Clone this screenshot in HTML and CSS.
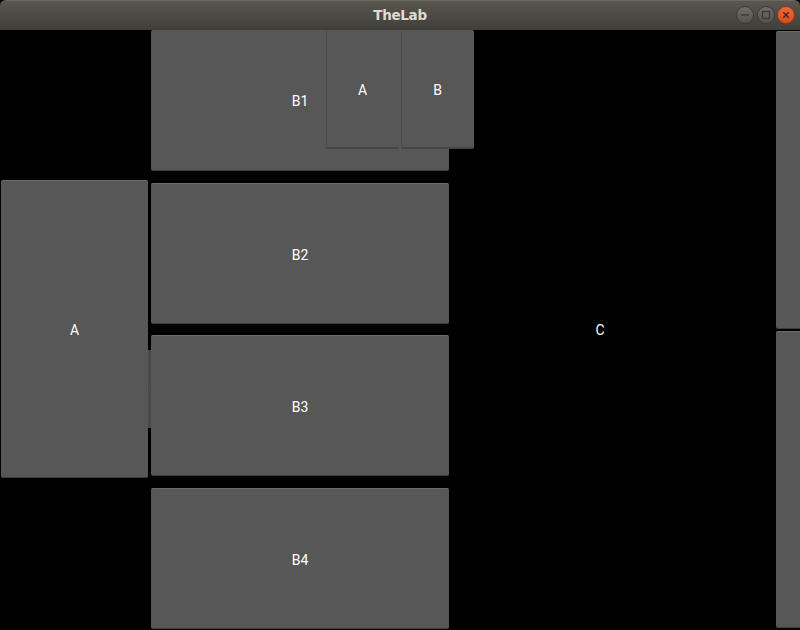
FILE: index.html
```html
<!DOCTYPE html>
<html>
<head>
<meta charset="utf-8">
<title>TheLab</title>
<link rel="stylesheet" href="styles.css">
</head>
<body>
<div class="window">
  <header class="titlebar">
    <span class="title">TheLab</span>
    <div class="controls">
      <span class="wbtn">
        <svg width="18" height="18" viewBox="0 0 18 18"><line x1="5" y1="9" x2="13" y2="9" stroke="#3a3935" stroke-width="1.4"/></svg>
      </span>
      <span class="wbtn">
        <svg width="18" height="18" viewBox="0 0 18 18"><rect x="5.5" y="5.5" width="7" height="7" fill="none" stroke="#3a3935" stroke-width="1.3"/></svg>
      </span>
      <span class="wbtn close">
        <svg width="18" height="18" viewBox="0 0 18 18"><path d="M6.3 6.3 L11.7 11.7 M11.7 6.3 L6.3 11.7" stroke="#3b2a22" stroke-width="1.4"/></svg>
      </span>
    </div>
  </header>
  <main class="stage">
    <div class="col-left">
      <div class="tile big-a">A</div>
    </div>
    <div class="col-mid">
      <div class="tile btile b1"><span class="b1-label">B1</span></div>
      <div class="tile btile">B2</div>
      <div class="tile btile">B3</div>
      <div class="tile btile">B4</div>
    </div>
    <div class="col-c">C</div>
    <div class="col-right">
      <div class="tile strip top"></div>
      <div class="tile strip"></div>
    </div>
    <div class="tile mini mini-a">A</div>
    <div class="tile mini mini-b">B</div>
    <div class="splitter"><span class="dot"></span></div>
  </main>
</div>
</body>
</html>
```

FILE: styles.css
```css
* { box-sizing: border-box; }
html, body {
  margin: 0;
  padding: 0;
  background: #000;
  width: 800px;
  height: 630px;
  overflow: hidden;
  font-family: Roboto, "Noto Sans", sans-serif;
}
.window {
  width: 800px;
  height: 630px;
  display: flex;
  flex-direction: column;
}
.titlebar {
  height: 30px;
  flex: none;
  position: relative;
  display: flex;
  align-items: center;
  justify-content: center;
  background: linear-gradient(#59574f, #3f3e3a);
  border-radius: 6px 6px 0 0;
  border-top: 1px solid #6b6860;
}
.title {
  font-family: "DejaVu Sans", sans-serif;
  font-weight: bold;
  font-size: 13.5px;
  color: #dfdbd2;
  letter-spacing: -0.3px;
  margin-top: -1px;
}
.controls {
  position: absolute;
  right: 5px;
  top: 5px;
  display: flex;
  gap: 2.5px;
}
.wbtn {
  width: 18px;
  height: 18px;
  border-radius: 50%;
  background: linear-gradient(#6f6d66, #55534d);
  border: 1px solid #3a3935;
  display: flex;
  align-items: center;
  justify-content: center;
}
.wbtn svg { display: block; margin: -1px; }
.wbtn.close {
  background: linear-gradient(#f0673a, #de4b19);
  border-color: #8a3a1c;
}
.stage {
  position: relative;
  flex: 1;
  display: flex;
  background: #000;
  color: #fff;
  font-size: 14px;
}
.tile {
  background: #575757;
  border-top: 1px solid #6c6c6c;
  border-bottom: 1px solid #3c3c3c;
  border-radius: 2px;
  display: flex;
  align-items: center;
  justify-content: center;
  color: #fff;
}
.col-left {
  width: 151px;
  flex: none;
  display: flex;
  align-items: center;
  padding-left: 1px;
  padding-right: 3px;
}
.big-a {
  width: 147px;
  height: 298px;
  margin-top: -2px;
  padding-top: 2px;
}
.col-mid {
  width: 298px;
  flex: none;
  display: flex;
  flex-direction: column;
  justify-content: space-between;
  padding-bottom: 1px;
}
.btile { height: 141px; padding-top: 3px; }
.b1 { border-top-color: #575757; padding-top: 1px; }
.col-c {
  flex: 1;
  display: flex;
  align-items: center;
  justify-content: center;
  padding-right: 25px;
}
.col-right {
  width: 24px;
  flex: none;
  display: flex;
  flex-direction: column;
  gap: 2px;
  padding-top: 1px;
  padding-bottom: 2px;
}
.strip { flex: 1; border-radius: 2px 0 0 2px; }
.mini {
  position: absolute;
  top: 0;
  width: 73px;
  height: 119px;
  border-top-color: #575757;
  border-bottom: 2px solid #464646;
  border-left: 1px solid #4c4c4c;
  padding-top: 2px;
  padding-right: 1px;
}
.mini-a { left: 326px; }
.mini-b { left: 401px; }
.splitter {
  position: absolute;
  left: 148px;
  top: 320px;
  width: 3px;
  height: 78px;
  background: #4a4a4a;
}
.dot {
  position: absolute;
  left: 1px;
  top: 37px;
  width: 1px;
  height: 4px;
  background: #3a3aff;
}
```
